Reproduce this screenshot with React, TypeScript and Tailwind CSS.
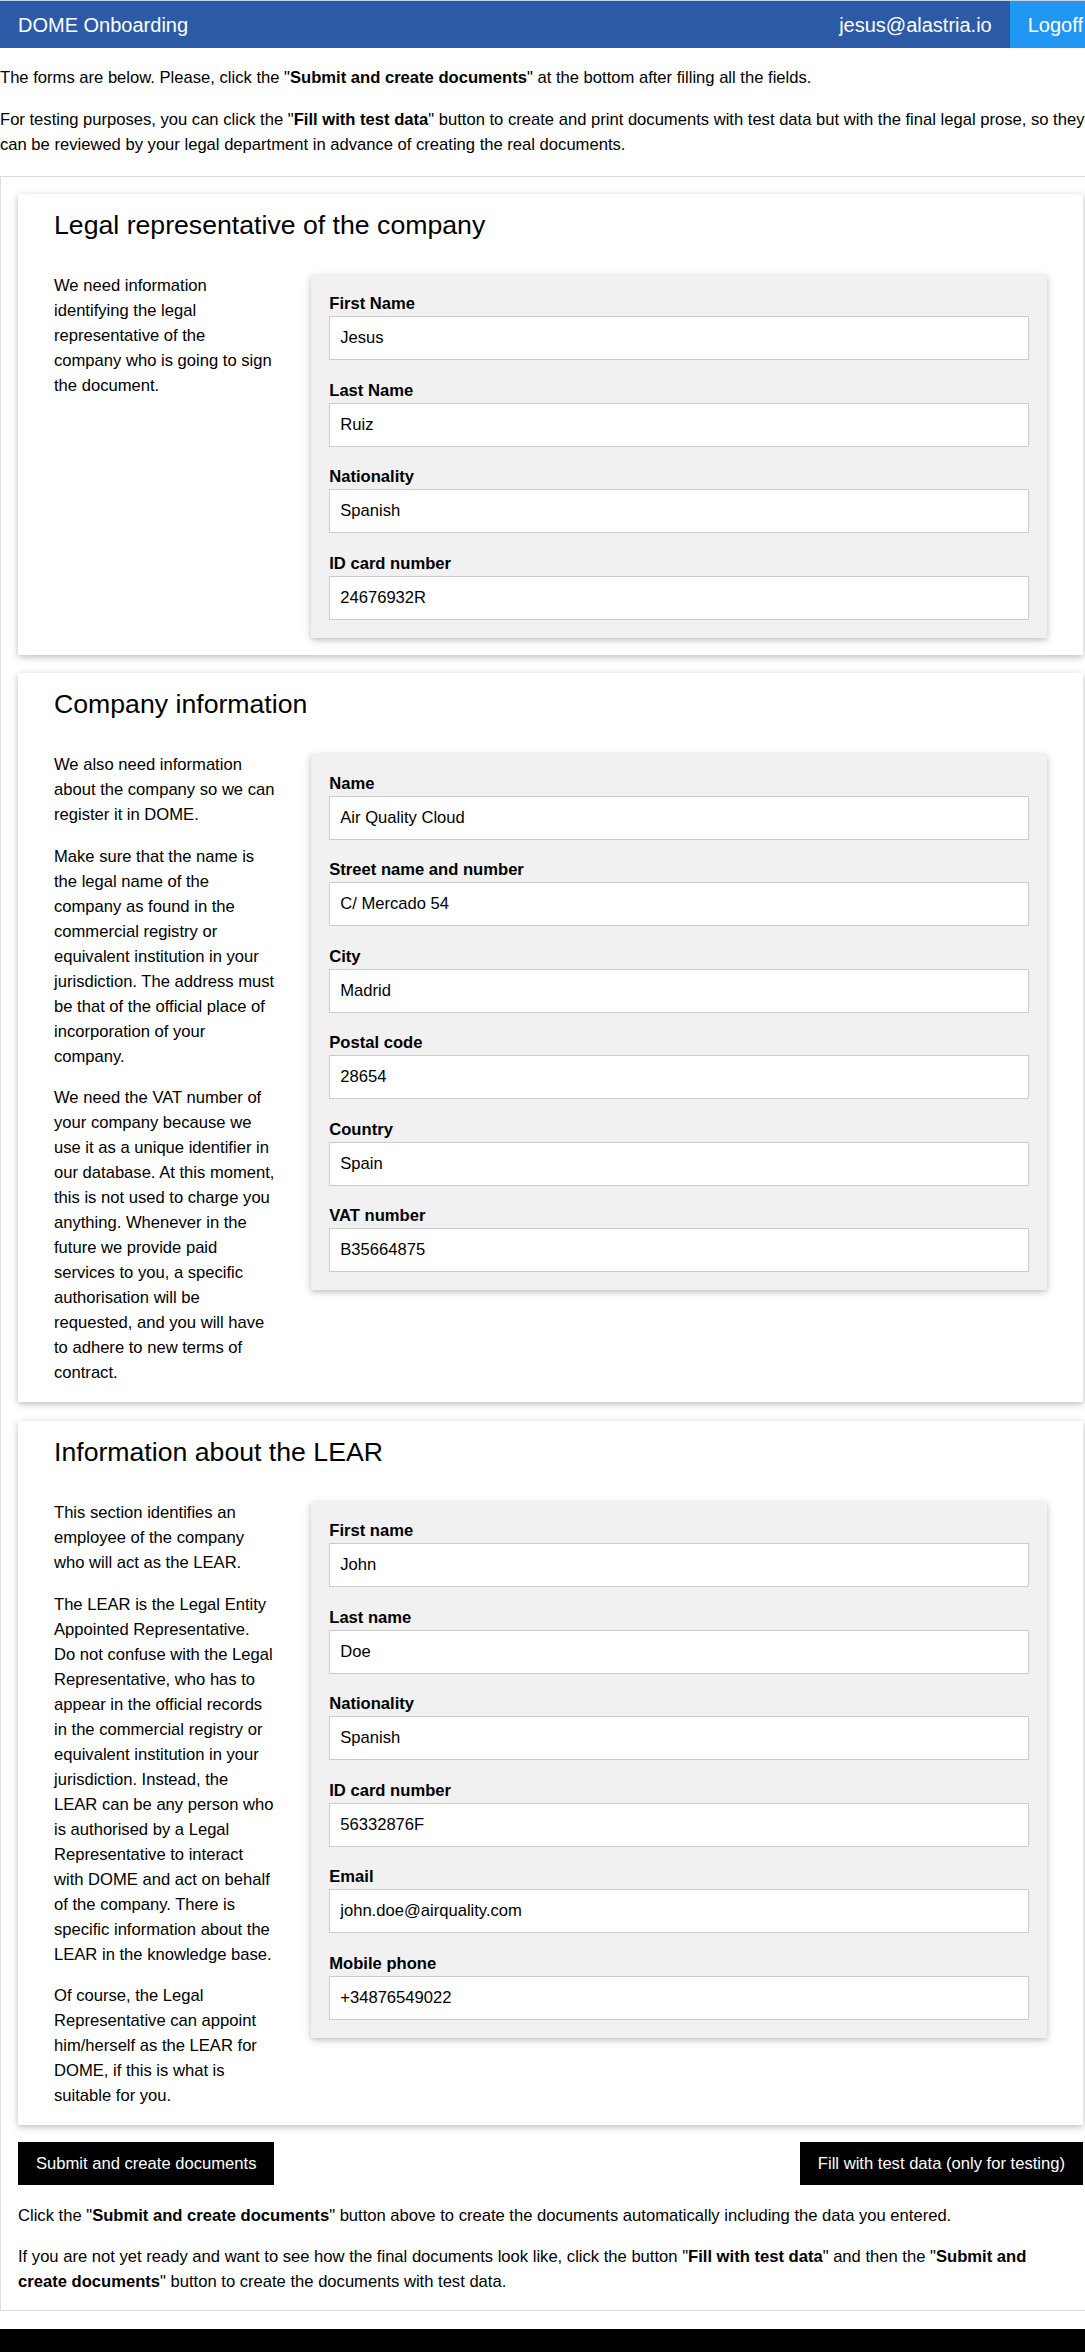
import React from "react";

type Field = { label: string; value: string };

type Section = {
  title: string;
  paragraphs: string[];
  fields: Field[];
};

const sections: Section[] = [
  {
    title: "Legal representative of the company",
    paragraphs: [
      "We need information identifying the legal representative of the company who is going to sign the document.",
    ],
    fields: [
      { label: "First Name", value: "Jesus" },
      { label: "Last Name", value: "Ruiz" },
      { label: "Nationality", value: "Spanish" },
      { label: "ID card number", value: "24676932R" },
    ],
  },
  {
    title: "Company information",
    paragraphs: [
      "We also need information about the company so we can register it in DOME.",
      "Make sure that the name is the legal name of the company as found in the commercial registry or equivalent institution in your jurisdiction. The address must be that of the official place of incorporation of your company.",
      "We need the VAT number of your company because we use it as a unique identifier in our database. At this moment, this is not used to charge you anything. Whenever in the future we provide paid services to you, a specific authorisation will be requested, and you will have to adhere to new terms of contract.",
    ],
    fields: [
      { label: "Name", value: "Air Quality Cloud" },
      { label: "Street name and number", value: "C/ Mercado 54" },
      { label: "City", value: "Madrid" },
      { label: "Postal code", value: "28654" },
      { label: "Country", value: "Spain" },
      { label: "VAT number", value: "B35664875" },
    ],
  },
  {
    title: "Information about the LEAR",
    paragraphs: [
      "This section identifies an employee of the company who will act as the LEAR.",
      "The LEAR is the Legal Entity Appointed Representative. Do not confuse with the Legal Representative, who has to appear in the official records in the commercial registry or equivalent institution in your jurisdiction. Instead, the LEAR can be any person who is authorised by a Legal Representative to interact with DOME and act on behalf of the company. There is specific information about the LEAR in the knowledge base.",
      "Of course, the Legal Representative can appoint him/herself as the LEAR for DOME, if this is what is suitable for you.",
    ],
    fields: [
      { label: "First name", value: "John" },
      { label: "Last name", value: "Doe" },
      { label: "Nationality", value: "Spanish" },
      { label: "ID card number", value: "56332876F" },
      { label: "Email", value: "john.doe@airquality.com" },
      { label: "Mobile phone", value: "+34876549022" },
    ],
  },
];

const cardShadow =
  "shadow-[0_2px_5px_0_rgba(0,0,0,0.16),0_2px_10px_0_rgba(0,0,0,0.12)]";

function FormCard({ section }: { section: Section }) {
  return (
    <div className={`bg-white px-[18px] pb-[17px] ${cardShadow}`}>
      <h3 className="mt-[11px] px-[18px] text-[26.67px] leading-[40px] font-normal text-black">
        {section.title}
      </h3>
      <div className="mt-[28px] flex items-start">
        <div className="w-1/4 px-[18px] flex flex-col gap-[16.67px]">
          {section.paragraphs.map((p, i) => (
            <p key={i}>{p}</p>
          ))}
        </div>
        <div className="w-3/4 px-[18px] pt-[2px]">
          <div
            className={`bg-[#f1f1f1] px-[18px] pt-[16.5px] pb-[18px] flex flex-col gap-[17.5px] ${cardShadow}`}
          >
            {section.fields.map((f) => (
              <label key={f.label} className="flex flex-col">
                <span className="font-bold leading-[25px]">{f.label}</span>
                <input
                  defaultValue={f.value}
                  className="h-[44px] w-full border border-[#ccc] bg-white px-[10px] text-black outline-none"
                />
              </label>
            ))}
          </div>
        </div>
      </div>
    </div>
  );
}

export default function App() {
  return (
    <div
      className="w-full overflow-hidden bg-white text-[16.6px] leading-[25px] text-black"
      style={{ fontFamily: '"Liberation Sans", Arial, sans-serif' }}
    >
      <div className="w-[1101px]">
        <nav className="h-[48px] flex items-stretch bg-[#2d5aa7] border-t border-[#c9d3e6] text-white text-[20px] leading-[30px]">
          <div className="px-[18px] flex items-center">DOME Onboarding</div>
          <div className="ml-auto px-[18px] flex items-center">jesus@alastria.io</div>
          <div className="px-[18px] flex items-center bg-[#2196f3]">Logoff</div>
        </nav>

        <div className="pt-[17px] flex flex-col gap-[16.67px]">
          <p>
            The forms are below. Please, click the "<b>Submit and create documents</b>" at
            the bottom after filling all the fields.
          </p>
          <p>
            For testing purposes, you can click the "<b>Fill with test data</b>" button to
            create and print documents with test data but with the final legal prose, so they
            can be reviewed by your legal department in advance of creating the real documents.
          </p>
        </div>

        <div className="mt-[19px] border border-[#ddd] px-[17px] pt-[17px] pb-[16px]">
          <div className="flex flex-col gap-[18.5px]">
            {sections.map((s) => (
              <FormCard key={s.title} section={s} />
            ))}
          </div>

          <div className="mt-[17px] flex justify-between">
            <button className="h-[43px] px-[18px] bg-black text-white">
              Submit and create documents
            </button>
            <button className="h-[43px] px-[18px] bg-black text-white">
              Fill with test data (only for testing)
            </button>
          </div>

          <p className="mt-[17.5px] pr-[12px]">
            Click the "<b>Submit and create documents</b>" button above to create the documents
            automatically including the data you entered.
          </p>
          <p className="mt-[16px] pr-[12px]">
            If you are not yet ready and want to see how the final documents look like, click the
            button "<b>Fill with test data</b>" and then the "<b>Submit and create documents</b>"
            button to create the documents with test data.
          </p>
        </div>

        <footer className="mt-[18px] h-[60px] bg-black" />
      </div>
    </div>
  );
}
